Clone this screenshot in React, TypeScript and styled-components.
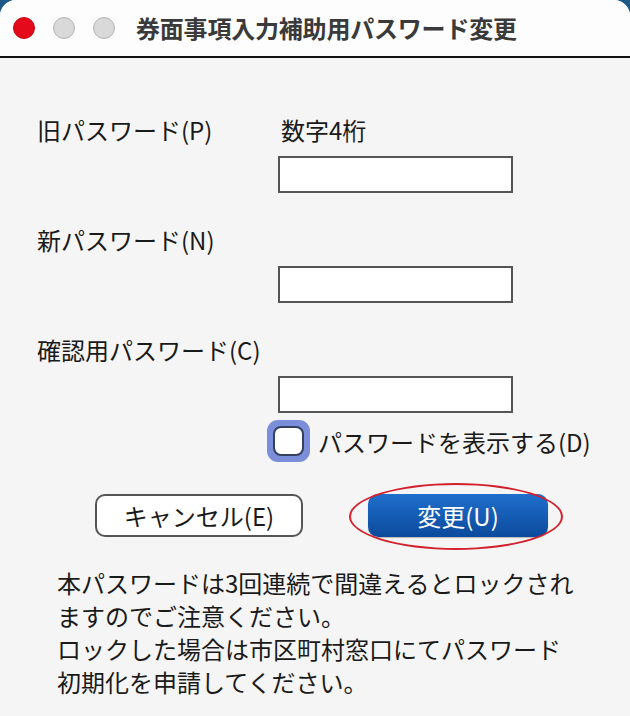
import React from "react";
import styled, { createGlobalStyle } from "styled-components";

const Global = createGlobalStyle`
  html, body { margin: 0; padding: 0; }
  body {
    background: #1d5a88;
    font-family: "Noto Sans CJK JP", "Noto Sans", sans-serif;
  }
`;

const Window = styled.div`
  width: 630px;
  height: 716px;
  background: #f5f5f5;
  border-radius: 16px 16px 0 0;
  overflow: hidden;
  display: flex;
  flex-direction: column;
`;

const TitleBar = styled.div`
  height: 56px;
  flex: none;
  background: #fdfdfd;
  border-bottom: 2px solid #111;
  display: flex;
  align-items: center;
  padding-left: 13px;
`;

const Light = styled.span<{ $red?: boolean }>`
  width: 22px;
  height: 22px;
  box-sizing: border-box;
  border-radius: 50%;
  margin-right: 18px;
  background: ${(p) => (p.$red ? "#e5091c" : "#d9d9d9")};
  border: 1.5px solid ${(p) => (p.$red ? "#c80616" : "#b3b3b3")};
`;

const Title = styled.h1`
  margin: 0 0 0 3px;
  font-size: 24px;
  font-weight: 700;
  color: #3a3a3a;
  line-height: 1;
  letter-spacing: -0.2px;
`;

const Content = styled.div`
  padding: 55px 0 0 37px;
  display: flex;
  flex-direction: column;
  color: #1a1a1a;
  font-size: 24px;
`;

const LabelRow = styled.div<{ $gap: number }>`
  display: flex;
  height: 34px;
  align-items: center;
  margin-top: ${(p) => p.$gap}px;
`;

const Label = styled.label`
  width: 244px;
  flex: none;
  line-height: 34px;
  white-space: nowrap;
`;

const Hint = styled.span`
  line-height: 34px;
`;

const Input = styled.input`
  box-sizing: border-box;
  width: 235px;
  height: 37px;
  margin: ${(p: { $top?: number }) => p.$top ?? 9}px 0 0 241px;
  border: 2px solid #555;
  background: #fff;
  outline: none;
  font-size: 18px;
`;

const CheckRow = styled.label`
  display: flex;
  align-items: center;
  height: 42px;
  margin: 7px 0 0 230px;
  white-space: nowrap;
`;

const CheckRing = styled.span`
  width: 43px;
  height: 42px;
  box-sizing: border-box;
  border-radius: 11px;
  background: #7b8ed9;
  display: flex;
  align-items: center;
  justify-content: center;
  margin-right: 8px;
`;

const CheckBox = styled.span`
  width: 31px;
  height: 30px;
  box-sizing: border-box;
  border-radius: 8px;
  background: #fff;
  border: 2px solid #35405e;
`;

const ButtonRow = styled.div`
  display: flex;
  margin: 32px 0 0 58px;
`;

const CancelButton = styled.button`
  width: 208px;
  height: 43px;
  box-sizing: border-box;
  border: 2px solid #555;
  border-radius: 10px;
  background: #fff;
  font-family: inherit;
  font-size: 24px;
  color: #1a1a1a;
  padding: 0;
  line-height: 1;
`;

const PrimaryWrap = styled.div`
  position: relative;
  margin-left: 65px;
`;

const PrimaryButton = styled.button`
  width: 180px;
  height: 43px;
  border: none;
  border-radius: 10px;
  background: linear-gradient(#1f6fcc, #0b4a9c);
  font-family: inherit;
  font-size: 24px;
  color: #fff;
  padding: 0;
  line-height: 1;
  box-shadow: 0 1px 1px rgba(0, 0, 0, 0.25);
`;

const Ellipse = styled.span`
  position: absolute;
  left: -19px;
  top: -11px;
  width: 214px;
  height: 67px;
  box-sizing: border-box;
  border: 2px solid #d4202c;
  border-radius: 50%;
  pointer-events: none;
`;

const Note = styled.p`
  margin: 29px 0 0 20px;
  font-size: 24px;
  line-height: 33px;
  color: #1a1a1a;
`;

export default function App() {
  return (
    <>
      <Global />
      <Window>
        <TitleBar>
          <Light $red />
          <Light />
          <Light />
          <Title>券面事項入力補助用パスワード変更</Title>
        </TitleBar>
        <Content>
          <LabelRow $gap={0}>
            <Label>旧パスワード(P)</Label>
            <Hint>数字4桁</Hint>
          </LabelRow>
          <Input type="password" />
          <LabelRow $gap={30}>
            <Label>新パスワード(N)</Label>
          </LabelRow>
          <Input type="password" />
          <LabelRow $gap={30}>
            <Label>確認用パスワード(C)</Label>
          </LabelRow>
          <Input type="password" />
          <CheckRow>
            <CheckRing>
              <CheckBox />
            </CheckRing>
            パスワードを表示する(D)
          </CheckRow>
          <ButtonRow>
            <CancelButton>キャンセル(E)</CancelButton>
            <PrimaryWrap>
              <PrimaryButton>変更(U)</PrimaryButton>
              <Ellipse />
            </PrimaryWrap>
          </ButtonRow>
          <Note>
            本パスワードは3回連続で間違えるとロックされ
            <br />
            ますのでご注意ください。
            <br />
            ロックした場合は市区町村窓口にてパスワード
            <br />
            初期化を申請してください。
          </Note>
        </Content>
      </Window>
    </>
  );
}
